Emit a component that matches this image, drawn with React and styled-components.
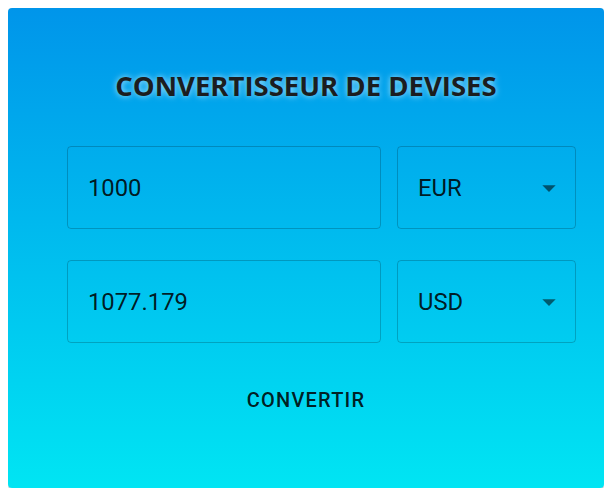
import styled, { createGlobalStyle } from 'styled-components';

const GlobalStyle = createGlobalStyle`
  body {
    margin: 8px;
    background: #ffffff;
    font-family: Roboto, "Liberation Sans", sans-serif;
  }
`;

const Card = styled.div`
  height: 480px;
  box-sizing: border-box;
  border-radius: 4px;
  background: linear-gradient(to bottom, #0095ea, #00e5f3);
  box-shadow: 0px 2px 1px -1px rgba(0, 0, 0, 0.2), 0px 1px 1px 0px rgba(0, 0, 0, 0.14),
    0px 1px 3px 0px rgba(0, 0, 0, 0.12);
  padding-top: 62px;
  display: flex;
  flex-direction: column;
`;

const Title = styled.h1`
  margin: 0;
  text-align: center;
  font-family: "Open Sans", "Noto Sans", sans-serif;
  font-weight: 700;
  font-size: 27.5px;
  line-height: 32px;
  color: #1b1d20;
  text-shadow: 0 0 6px rgba(190, 235, 255, 0.95);
`;

const Form = styled.div`
  margin-top: 44px;
  padding: 0 28px 0 59px;
  display: grid;
  grid-template-columns: 1fr 179px;
  column-gap: 16px;
  row-gap: 31px;
`;

const Field = styled.div`
  height: 83px;
  box-sizing: border-box;
  border: 1px solid rgba(0, 0, 0, 0.2);
  border-radius: 4px;
  display: flex;
  align-items: center;
  padding: 0 20px;
  font-size: 23.8px;
  color: rgba(0, 0, 0, 0.87);
  justify-content: ${(p) => (p.$select ? 'space-between' : 'flex-start')};
  padding-right: ${(p) => (p.$select ? '10px' : '20px')};
`;

const Arrow = styled.svg`
  width: 32px;
  height: 32px;
  fill: rgba(0, 0, 0, 0.54);
`;

const Button = styled.button`
  align-self: center;
  margin-top: 39px;
  height: 36px;
  padding: 0 16px;
  border: none;
  background: none;
  font-family: Roboto, "Liberation Sans", sans-serif;
  font-weight: 500;
  font-size: 20px;
  letter-spacing: 0.06em;
  color: rgba(0, 0, 0, 0.87);
  cursor: pointer;
`;

const DropArrow = () => (
  <Arrow viewBox="0 0 24 24">
    <path d="M7 10l5 5 5-5z" />
  </Arrow>
);

const App = () => {
  return (
    <>
      <GlobalStyle />
      <Card>
        <Title>CONVERTISSEUR DE DEVISES</Title>
        <Form>
          <Field>1000</Field>
          <Field $select>
            EUR
            <DropArrow />
          </Field>
          <Field>1077.179</Field>
          <Field $select>
            USD
            <DropArrow />
          </Field>
        </Form>
        <Button>CONVERTIR</Button>
      </Card>
    </>
  );
};

export default App;
